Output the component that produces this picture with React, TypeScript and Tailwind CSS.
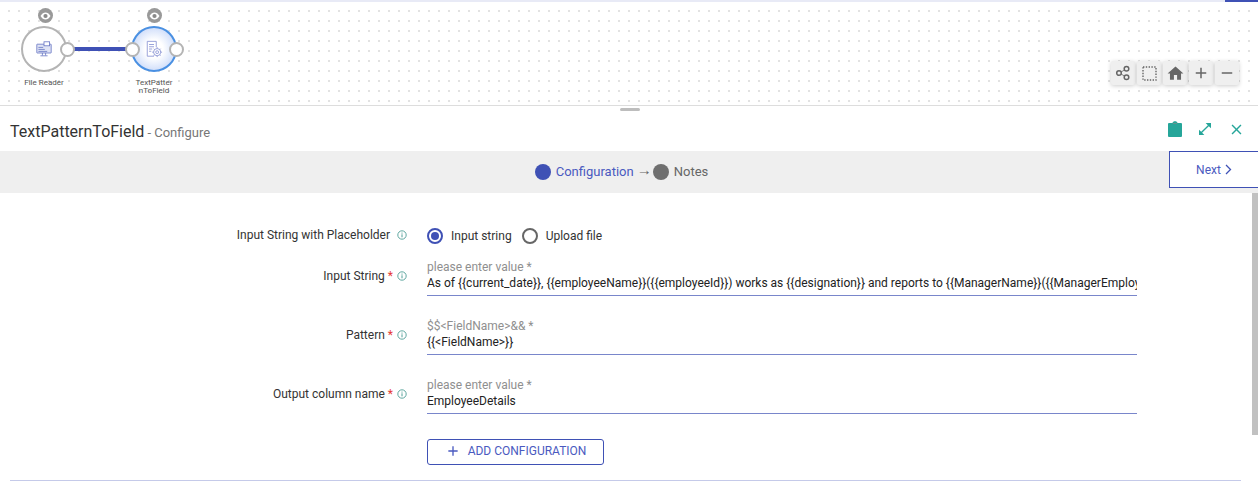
import React from "react";
import { MdAdd, MdClose, MdHome, MdOpenInFull, MdRemove } from "react-icons/md";

function Eye({ x }: { x: string }) {
  return (
    <div className={`absolute top-[6px] ${x} flex h-[15px] w-[15px] items-center justify-center rounded-full bg-[#999999]`}>
      <svg width="11" height="8" viewBox="0 0 11 8">
        <path d="M0.5 4C2 1.5 3.6 0.5 5.5 0.5S9 1.5 10.5 4C9 6.5 7.4 7.5 5.5 7.5S2 6.5 0.5 4Z" fill="#ffffff" />
        <circle cx="5.5" cy="4" r="2.1" fill="#8a8a8a" />
      </svg>
    </div>
  );
}

function Port({ x }: { x: string }) {
  return <div className={`absolute top-[40px] ${x} h-[15px] w-[15px] rounded-full border-2 border-[#b4b4b4] bg-white`} />;
}

function Info() {
  return (
    <svg width="10" height="10" viewBox="0 0 10 10" className="shrink-0">
      <circle cx="5" cy="5" r="4.2" fill="none" stroke="#4f9e96" strokeWidth="0.9" />
      <path d="M5 4.3V7.3" stroke="#4f9e96" strokeWidth="1" />
      <path d="M5 2.6V3.6" stroke="#4f9e96" strokeWidth="1" />
    </svg>
  );
}

function Row({ label, hint, value }: { label: string; hint: string; value: string }) {
  return (
    <div className="flex h-[59px] items-start">
      <div className="mt-[8px] flex h-[16px] w-[407px] items-center justify-end gap-[4px] text-[12px] text-[#333333]">
        <span>
          {label}
          <span className="text-[#e53935]"> *</span>
        </span>
        <Info />
      </div>
      <div className="ml-[20px] w-[710px] border-b border-[#7986cb] pb-[4px]">
        <div className="h-[15px] text-[12px] leading-[15px] text-[#8f8f8f]">{hint}</div>
        <div className="h-[16px] overflow-hidden whitespace-nowrap text-[12px] leading-[16px] text-[#222222]">{value}</div>
      </div>
    </div>
  );
}

function ToolButton({ children }: { children: React.ReactNode }) {
  return (
    <div className="flex h-[24px] w-[24px] items-center justify-center rounded-[2px] bg-[#efefef] text-[#666666] shadow-[0_1px_4px_rgba(0,0,0,0.2)]">
      {children}
    </div>
  );
}

export default function App() {
  return (
    <div className="relative h-[482px] w-[1258px] overflow-hidden bg-white font-['Roboto',sans-serif]">
      <div className="flex h-[2px] justify-end bg-[#e8eaf6]">
        <div className="h-[2px] w-[33px] bg-[#3f51b5]" />
      </div>

      <div className="relative h-[104px] border-b border-[#dddddd] bg-[radial-gradient(circle,#e2e2e2_0.9px,transparent_1.1px)] bg-[length:10px_10px] bg-[position:4px_4px]">
        <Eye x="left-[38px]" />
        <Eye x="left-[147px]" />

        <div className="absolute left-[21px] top-[24px] flex h-[46px] w-[46px] items-center justify-center rounded-full border-2 border-[#b4b4b4] bg-white">
          <svg width="16" height="16" viewBox="0 0 20 20" fill="none" stroke="#6573c3" strokeWidth="1">
            <rect x="1" y="4" width="18" height="11" rx="0.5" fill="#dfe3f5" />
            <rect x="10" y="1" width="7" height="5" fill="#ffffff" />
            <path d="M3 8H9M3 10.5H11M3 13H14" />
            <path d="M8 15V18M12 15V18M5.5 18.5H14.5" />
          </svg>
        </div>
        <div className="absolute left-[74px] top-[45px] h-[4px] w-[52px] bg-[#3f51b5]" />
        <div className="absolute left-[131px] top-[24px] flex h-[46px] w-[46px] items-center justify-center rounded-full border-2 border-[#4a90e2] bg-[radial-gradient(circle,#ffffff_30%,#b4caf7_100%)]">
          <svg width="18" height="18" viewBox="0 0 20 20" fill="none" stroke="#8f99d6" strokeWidth="1">
            <path d="M10 18H2.5V1.5H12.5V8" fill="#ffffff" />
            <path d="M4.5 5H10M4.5 7.5H10M4.5 10H8M4.5 12.5H7" />
            <circle cx="13.5" cy="13.5" r="4" fill="#ffffff" />
            <circle cx="13.5" cy="13.5" r="1.6" />
            <path d="M13.5 8V9.5M13.5 17.5V19M8 13.5H9.5M17.5 13.5H19M9.7 9.7L10.7 10.7M16.3 16.3L17.3 17.3M17.3 9.7L16.3 10.7M10.7 16.3L9.7 17.3" />
          </svg>
        </div>
        <Port x="left-[60px]" />
        <Port x="left-[125px]" />
        <Port x="left-[169px]" />

        <div className="absolute left-[14px] top-[77px] w-[60px] text-center text-[8px] leading-[8px] text-[#555555]">File Reader</div>
        <div className="absolute left-[124px] top-[77px] w-[60px] text-center text-[8px] leading-[8px] text-[#555555]">
          TextPatter
          <br />
          nToField
        </div>

        <div className="absolute left-[1111px] top-[59px] flex gap-[2px]">
          <ToolButton>
            <svg width="16" height="16" viewBox="0 0 16 16" fill="none" stroke="#666666" strokeWidth="1.5">
              <circle cx="4" cy="8" r="2.3" />
              <circle cx="11.5" cy="3.8" r="2.3" />
              <circle cx="11.5" cy="12.2" r="2.3" />
              <path d="M6 7L9.5 5M6 9L9.5 11" strokeWidth="0.8" />
            </svg>
          </ToolButton>
          <ToolButton>
            <svg width="15" height="15" viewBox="0 0 15 15" fill="none">
              <rect x="1" y="1" width="13" height="13" stroke="#666666" strokeWidth="1.4" strokeDasharray="1.4 1.4" />
            </svg>
          </ToolButton>
          <ToolButton>
            <MdHome size={19} />
          </ToolButton>
          <ToolButton>
            <MdAdd size={18} />
          </ToolButton>
          <ToolButton>
            <MdRemove size={18} />
          </ToolButton>
        </div>
      </div>

      <div className="relative flex h-[45px] items-center px-[10px] pt-[7px]">
        <div className="absolute left-[620px] top-[2px] h-[3px] w-[20px] rounded-[2px] bg-[#bdbdbd]" />
        <span className="text-[16px] text-[#333333]">TextPatternToField</span>
        <span className="ml-[3px] mt-[2px] text-[13px] text-[#777777]">- Configure</span>
        <div className="mb-[6px] ml-auto mr-[3px] flex items-center gap-[15px] text-[#26a69a]">
          <svg width="14" height="16" viewBox="0 0 14 16">
            <path d="M1 2H4.5C4.7 0.8 5.7 0.2 7 0.2S9.3 0.8 9.5 2H13A1 1 0 0 1 14 3V15A1 1 0 0 1 13 16H1A1 1 0 0 1 0 15V3A1 1 0 0 1 1 2Z" fill="#26a69a" />
            <path d="M4.8 2.4H9.2" stroke="#7a8f8c" strokeWidth="0.8" />
          </svg>
          <MdOpenInFull size={16} />
          <MdClose size={17} />
        </div>
      </div>

      <div className="relative flex h-[42px] items-center justify-center bg-[#efefef] pr-[15px] text-[13px]">
        <div className="h-[16px] w-[16px] rounded-full bg-[#3f51b5]" />
        <span className="ml-[5px] text-[#4a5ac0]">Configuration</span>
        <span className="mb-[3px] ml-[3px] text-[15px] leading-[15px] text-[#666666]">→</span>
        <div className="ml-[1px] h-[16px] w-[16px] rounded-full bg-[#6f6f6f]" />
        <span className="ml-[5px] text-[#666666]">Notes</span>
        <div className="absolute right-0 top-0 flex h-[37px] w-[89px] items-center justify-center gap-[4px] border border-r-0 border-[#3f51b5] bg-white text-[12px] text-[#4a5ac0]">
          Next
          <svg width="7" height="11" viewBox="0 0 7 11" fill="none" stroke="#3f51b5" strokeWidth="1.3">
            <path d="M1 1L5.5 5.5L1 10" />
          </svg>
        </div>
      </div>

      <div className="absolute right-0 top-[193px] h-[242px] w-[6px] bg-[#c1c1c1]" />

      <div className="flex flex-col pt-[34px]">
        <div className="flex h-[33px] items-start">
          <div className="flex h-[16px] w-[407px] items-center justify-end gap-[7px] text-[12px] text-[#333333]">
            <span>Input String with Placeholder</span>
            <Info />
          </div>
          <div className="ml-[20px] flex h-[18px] items-center text-[12px] text-[#333333]">
            <div className="flex h-[16px] w-[16px] items-center justify-center rounded-full border-2 border-[#3f51b5]">
              <div className="h-[8px] w-[8px] rounded-full bg-[#3f51b5]" />
            </div>
            <span className="ml-[8px]">Input string</span>
            <div className="ml-[10px] h-[16px] w-[16px] rounded-full border-2 border-[#666666]" />
            <span className="ml-[8px]">Upload file</span>
          </div>
        </div>
        <Row
          label="Input String"
          hint="please enter value *"
          value="As of {{current_date}}, {{employeeName}}({{employeeId}}) works as {{designation}} and reports to {{ManagerName}}({{ManagerEmployeeId}})"
        />
        <Row label="Pattern" hint="$$<FieldName>&& *" value="{{<FieldName>}}" />
        <Row label="Output column name" hint="please enter value *" value="EmployeeDetails" />
        <div className="ml-[427px] mt-[2px] flex h-[26px] w-[177px] items-center justify-center rounded-[3px] border border-[#3f51b5] pb-[2px] text-[12px] text-[#4a5ac0]">
          <MdAdd size={16} className="mr-[7px]" />
          ADD CONFIGURATION
        </div>
        <div className="ml-[10px] mt-[15px] h-px w-[1231px] bg-[#c5cae9]" />
      </div>
    </div>
  );
}
